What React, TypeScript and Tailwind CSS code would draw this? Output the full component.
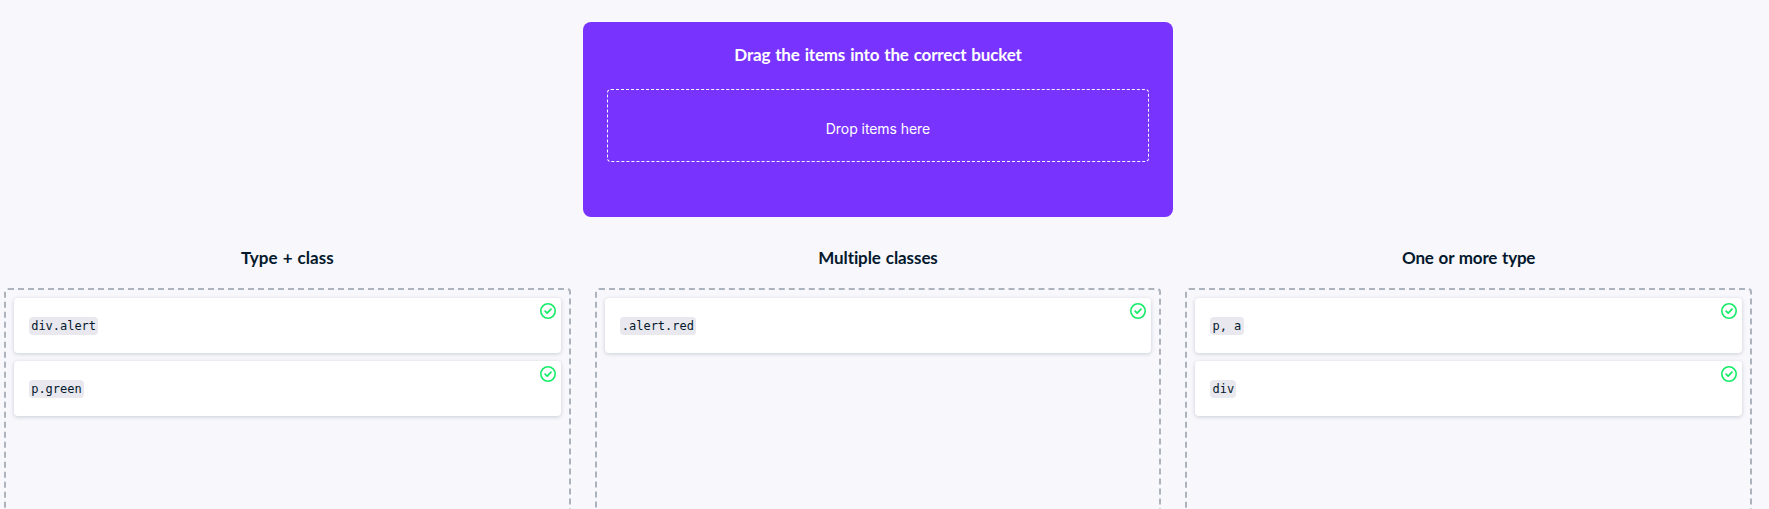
const buckets = [
  { title: "Type + class", spacing: "tracking-[0px]", items: ["div.alert", "p.green"] },
  { title: "Multiple classes", spacing: "tracking-[-0.09px]", items: [".alert.red"] },
  { title: "One or more type", spacing: "tracking-[-0.22px]", items: ["p, a", "div"] },
];

function CheckIcon() {
  return (
    <svg className="absolute top-[5px] right-[5px] size-4" viewBox="0 0 16 16" fill="none" stroke="#14ec68">
      <circle cx="8" cy="8" r="7.2" strokeWidth="1.6" />
      <path d="M5.1 8.1 7.2 10.2 11 6.1" strokeWidth="1.7" strokeLinecap="round" strokeLinejoin="round" />
    </svg>
  );
}

function Item({ code }: { code: string }) {
  return (
    <div className="relative flex h-[55px] items-center rounded bg-white pl-[15px] shadow-[0_1px_4px_rgba(5,25,45,0.18)]">
      <code className="flex h-[18px] items-center rounded bg-[#e8e8ee] px-[2.2px] font-['DejaVu_Sans_Mono',monospace] text-[12px] leading-[18px] tracking-[-0.025px] whitespace-pre text-[#05192d]">
        {code}
      </code>
      <CheckIcon />
    </div>
  );
}

export default function App() {
  return (
    <div className="flex h-[509px] flex-col overflow-hidden bg-[#f7f7fc] pt-[22px] pr-[17px] pl-1 font-[Lato,sans-serif] text-[#05192d]">
      <section className="flex h-[195px] w-[590px] shrink-0 flex-col self-center rounded-lg bg-[#7933ff] px-6 pt-[21px] text-white">
        <h2 className="text-center text-[17px] leading-6 font-bold tracking-[-0.17px] [word-spacing:1px]">
          Drag the items into the correct bucket
        </h2>
        <div className="mt-[22px] flex h-[73px] items-center justify-center rounded border border-dashed border-white pt-[6px] font-[Inter,sans-serif] text-[14px] leading-5 tracking-[-0.06px]">
          Drop items here
        </div>
      </section>
      <main className="mt-[29px] grid shrink-0 grid-cols-3 gap-6">
        {buckets.map((bucket) => (
          <section key={bucket.title} className="flex flex-col">
            <h3 className={`text-center text-[17px] leading-6 font-bold [word-spacing:1px] ${bucket.spacing}`}>{bucket.title}</h3>
            <div className="mt-[18px] flex h-[300px] flex-col gap-2 rounded border-2 border-dashed border-[#acb3bd] p-2">
              {bucket.items.map((code) => (
                <Item key={code} code={code} />
              ))}
            </div>
          </section>
        ))}
      </main>
    </div>
  );
}
